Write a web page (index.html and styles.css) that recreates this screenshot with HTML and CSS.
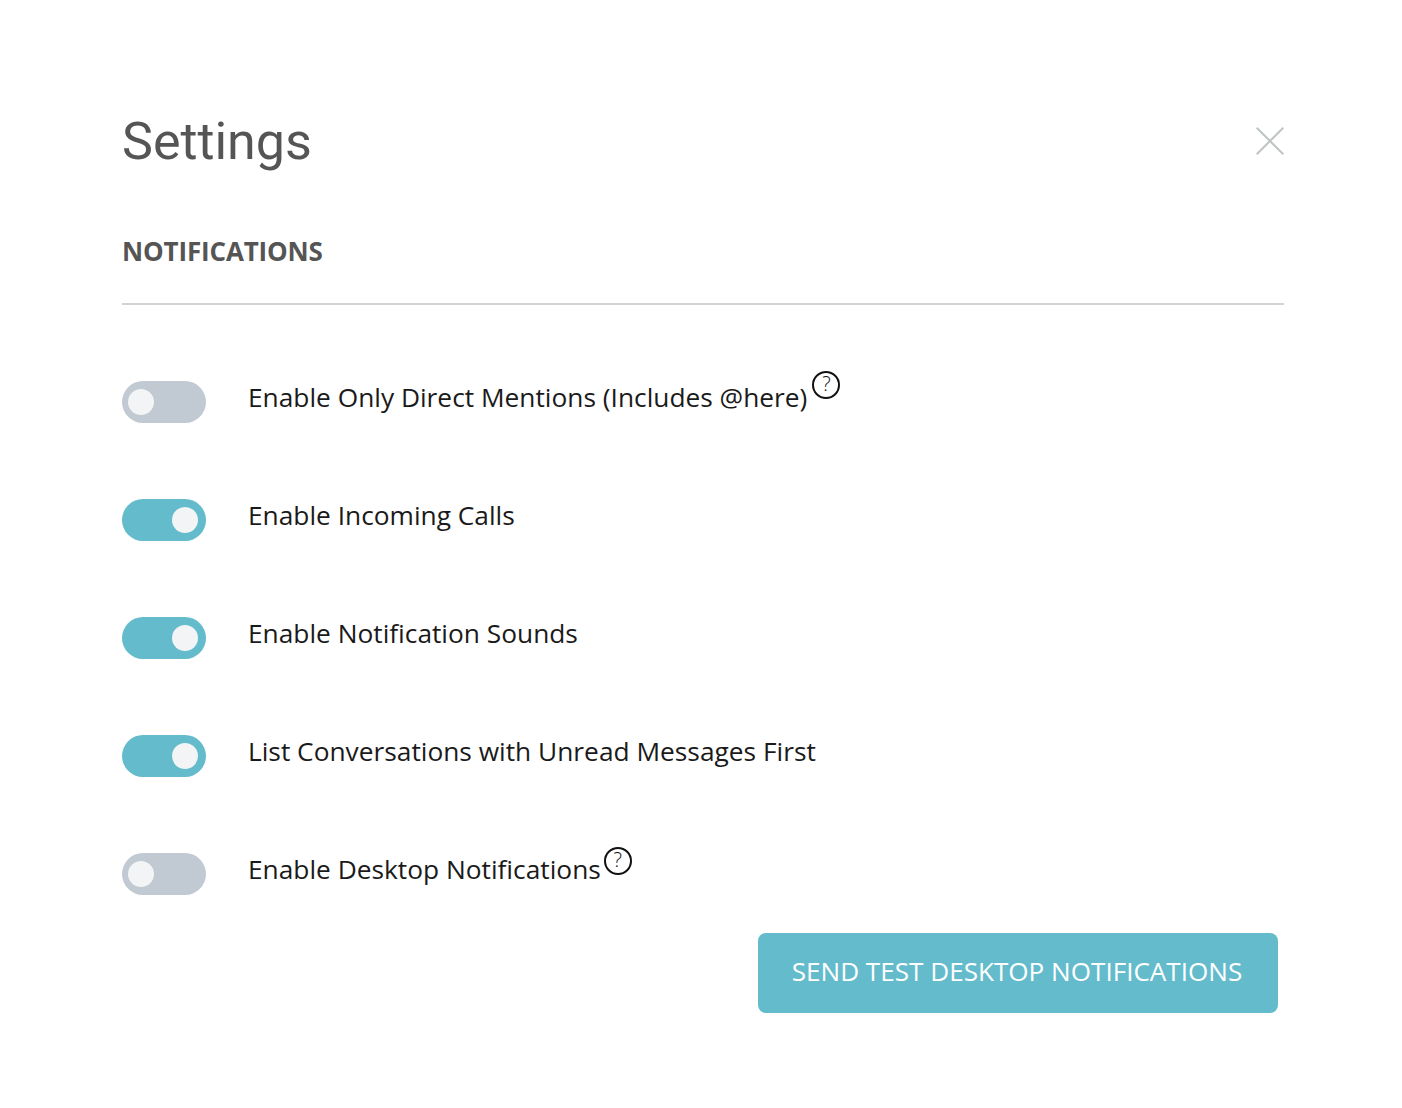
FILE: index.html
```html
<!DOCTYPE html>
<html lang="en">
<head>
<meta charset="utf-8">
<title>Settings</title>
<link rel="stylesheet" href="styles.css">
</head>
<body>
<main class="modal">
  <header class="modal-head">
    <h1 class="title">Settings</h1>
    <button class="close" aria-label="Close">
      <svg width="28" height="28" viewBox="0 0 28 28"><path d="M.7.7 27.3 27.3M27.3.7.7 27.3" fill="none" stroke="#bfc4c4" stroke-width="2"/></svg>
    </button>
  </header>
  <section class="section">
    <h2 class="section-title">NOTIFICATIONS</h2>
    <ul class="rows">
      <li class="row"><span class="toggle"><span class="knob"></span></span><span class="label">Enable Only Direct Mentions (Includes @here)</span><span class="help">?</span></li>
      <li class="row"><span class="toggle on"><span class="knob"></span></span><span class="label">Enable Incoming Calls</span></li>
      <li class="row"><span class="toggle on"><span class="knob"></span></span><span class="label">Enable Notification Sounds</span></li>
      <li class="row"><span class="toggle on"><span class="knob"></span></span><span class="label">List Conversations with Unread Messages First</span></li>
      <li class="row"><span class="toggle"><span class="knob"></span></span><span class="label">Enable Desktop Notifications</span><span class="help help-low">?</span></li>
    </ul>
    <div class="actions"><button class="send">SEND TEST DESKTOP NOTIFICATIONS</button></div>
  </section>
</main>
</body>
</html>
```
FILE: styles.css
```css
* { box-sizing: border-box; }
html, body { margin: 0; background: #fff; }
body { font-family: "Open Sans", sans-serif; color: #1a1a1a; }
.modal { padding: 110px 118px 0 122px; height: 1108px; overflow: hidden; }
.modal-head { display: flex; justify-content: space-between; align-items: center; height: 62px; }
.title { margin: 1px 0 0; align-self: flex-start; font: 400 52px/62px Roboto, sans-serif; color: #555; }
.close { padding: 0; border: 0; background: none; width: 28px; height: 28px; display: block; }
.close svg { display: block; }
.section-title { margin: 0; padding: 61px 0 34px; font: 700 26px/36px "Open Sans", sans-serif; color: #555; letter-spacing: -0.15px; border-bottom: 2px solid #d2d2d2; }
.rows { list-style: none; margin: 0; padding: 76px 0 0; }
.row { display: flex; align-items: flex-start; height: 118px; }
.toggle { width: 84px; height: 42px; border-radius: 21px; background: #c1c9d2; display: flex; align-items: center; padding: 0 8px 1px 6px; margin-right: 42px; flex: none; }
.toggle.on { background: #63bbcc; justify-content: flex-end; }
.knob { width: 26px; height: 26px; border-radius: 50%; background: #f2f4f5; display: block; }
.label { font-size: 26.3px; line-height: 32px; }
.help { width: 28px; height: 28px; margin: -10px 0 0 5px; border: 2px solid #111; border-radius: 50%; font-size: 20px; font-weight: 300; line-height: 22px; text-align: center; flex: none; color: #111; }
.help-low { margin: -6px 0 0 3px; }
.actions { display: flex; justify-content: flex-end; padding-right: 6px; margin-top: -38px; }
.send { width: 520px; height: 80px; border: 0; border-radius: 8px; background: #63bbcc; color: #fff; font: 400 26.1px/36px "Open Sans", sans-serif; padding: 0 2px 5px 0; }
```
